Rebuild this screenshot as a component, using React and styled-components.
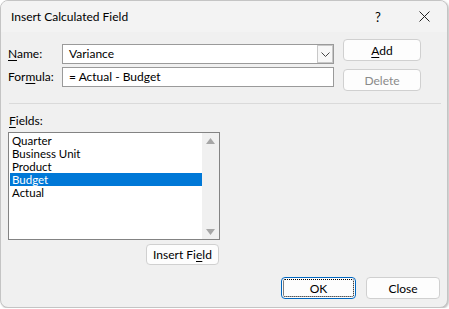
import React from "react";
import styled, { createGlobalStyle } from "styled-components";

const Global = createGlobalStyle`
  * { box-sizing: border-box; }
  body {
    margin: 0;
    background: #ffffff;
    font-family: Lato, "Noto Sans", sans-serif;
    font-size: 12px;
    color: #000;
  }
`;

const Window = styled.div`
  width: 448px;
  height: 308px;
  background: #f0f0f0;
  border: 1px solid #c4c4c4;
  border-radius: 8px;
  box-shadow: 1px 1px 2px rgba(0, 0, 0, 0.25);
  display: flex;
  flex-direction: column;
  overflow: hidden;
`;

const TitleBar = styled.div`
  height: 31px;
  display: flex;
  align-items: center;
  padding-left: 10px;
  background: #f3f3f3;
`;

const Title = styled.div`
  flex: 1;
  font-size: 12px;
`;

const TitleButton = styled.div`
  width: ${(p) => p.$w}px;
  display: flex;
  justify-content: center;
  align-items: center;
  font-size: 13px;
`;

const Body = styled.div`
  flex: 1;
  display: flex;
  flex-direction: column;
  padding: 7px 7px 0 7px;
`;

const TopArea = styled.div`
  display: flex;
  gap: 9px;
`;

const FormCol = styled.div`
  margin-top: 5px;
  display: flex;
  flex-direction: column;
  gap: 3px;
`;

const FormRow = styled.div`
  display: flex;
  align-items: center;
`;

const Label = styled.label`
  width: 54px;
  line-height: 16px;
`;

const TextBox = styled.div`
  width: 272px;
  height: 20px;
  background: #fff;
  border: 1px solid #9a9a9a;
  display: flex;
  align-items: center;
  padding-left: 6px;
  line-height: 16px;
`;

const BoxText = styled.span`
  flex: 1;
`;

const DropButton = styled.div`
  width: 16px;
  height: 18px;
  border: 1px solid #c8c8c8;
  background: #f7f7f7;
  display: flex;
  align-items: center;
  justify-content: center;
`;

const ButtonCol = styled.div`
  display: flex;
  flex-direction: column;
  gap: 8px;
`;

const Button = styled.div`
  position: relative;
  width: ${(p) => p.$w || 78}px;
  height: ${(p) => p.$h || 22}px;
  background: #fdfdfd;
  border: 1px solid ${(p) => (p.$default ? "#0067c0" : "#d0d0d0")};
  border-radius: 4px;
  display: flex;
  align-items: center;
  justify-content: center;
  color: ${(p) => (p.$disabled ? "#8a8a8a" : "#000")};
  &::after {
    content: "";
    display: ${(p) => (p.$default ? "block" : "none")};
    position: absolute;
    inset: 1px;
    border: 1px dotted #000;
    border-radius: 2px;
  }
`;

const Separator = styled.div`
  height: 1px;
  background: #dadada;
  margin: 12px 0 0 1px;
  width: 432px;
`;

const SectionLabel = styled.div`
  margin: 9px 0 0 1px;
  line-height: 16px;
`;

const ListBox = styled.div`
  margin-top: 3px;
  width: 212px;
  height: 108px;
  background: #fff;
  border: 1px solid #838383;
  display: flex;
  padding: 1px 0 0 1px;
`;

const Items = styled.div`
  flex: 1;
`;

const Item = styled.div`
  height: 13px;
  line-height: 13px;
  font-size: 11.5px;
  padding-left: 2px;
  background: ${(p) => (p.$selected ? "#0078d7" : "transparent")};
  color: ${(p) => (p.$selected ? "#fff" : "#000")};
`;

const ScrollBar = styled.div`
  width: 17px;
  margin-top: -1px;
  background: #f0f0f0;
  display: flex;
  flex-direction: column;
  justify-content: space-between;
  align-items: center;
  padding: 5px 0 4px;
`;

const InsertRow = styled.div`
  width: 212px;
  margin-top: 4px;
  display: flex;
  justify-content: flex-end;
  padding-right: 1px;
`;

const Footer = styled.div`
  margin-top: 12px;
  display: flex;
  justify-content: flex-end;
  gap: 10px;
`;

const U = styled.span`
  text-decoration: underline;
  text-underline-offset: 2px;
`;

const Arrow = ({ up }) => (
  <svg width="9" height="6" viewBox="0 0 9 6">
    <polygon points={up ? "0,6 9,6 4.5,0" : "0,0 9,0 4.5,6"} fill="#a6a6a6" />
  </svg>
);

const fields = ["Quarter", "Business Unit", "Product", "Budget", "Actual"];

export default function App() {
  return (
    <>
      <Global />
      <Window>
        <TitleBar>
          <Title>Insert Calculated Field</Title>
          <TitleButton $w={46}>?</TitleButton>
          <TitleButton $w={46}>
            <svg width="11" height="11" viewBox="0 0 11 11">
              <path d="M0.5 0.5 L10.5 10.5 M10.5 0.5 L0.5 10.5" stroke="#222" strokeWidth="1" />
            </svg>
          </TitleButton>
        </TitleBar>
        <Body>
          <TopArea>
            <FormCol>
              <FormRow>
                <Label><U>N</U>ame:</Label>
                <TextBox>
                  <BoxText>Variance</BoxText>
                  <DropButton>
                    <svg width="9" height="5" viewBox="0 0 9 5">
                      <path d="M0.5 0.5 L4.5 4.5 L8.5 0.5" stroke="#444" fill="none" strokeWidth="1" />
                    </svg>
                  </DropButton>
                </TextBox>
              </FormRow>
              <FormRow>
                <Label>For<U>m</U>ula:</Label>
                <TextBox>
                  <BoxText>= Actual - Budget</BoxText>
                </TextBox>
              </FormRow>
            </FormCol>
            <ButtonCol>
              <Button><span><U>A</U>dd</span></Button>
              <Button $disabled>Delete</Button>
            </ButtonCol>
          </TopArea>
          <Separator />
          <SectionLabel><U>F</U>ields:</SectionLabel>
          <ListBox>
            <Items>
              {fields.map((f) => (
                <Item key={f} $selected={f === "Budget"}>{f}</Item>
              ))}
            </Items>
            <ScrollBar>
              <Arrow up />
              <Arrow />
            </ScrollBar>
          </ListBox>
          <InsertRow>
            <Button $w={73} $h={21}>Insert Fi<U>e</U>ld</Button>
          </InsertRow>
          <Footer>
            <Button $w={75} $default>OK</Button>
            <Button $w={74}>Close</Button>
          </Footer>
        </Body>
      </Window>
    </>
  );
}
